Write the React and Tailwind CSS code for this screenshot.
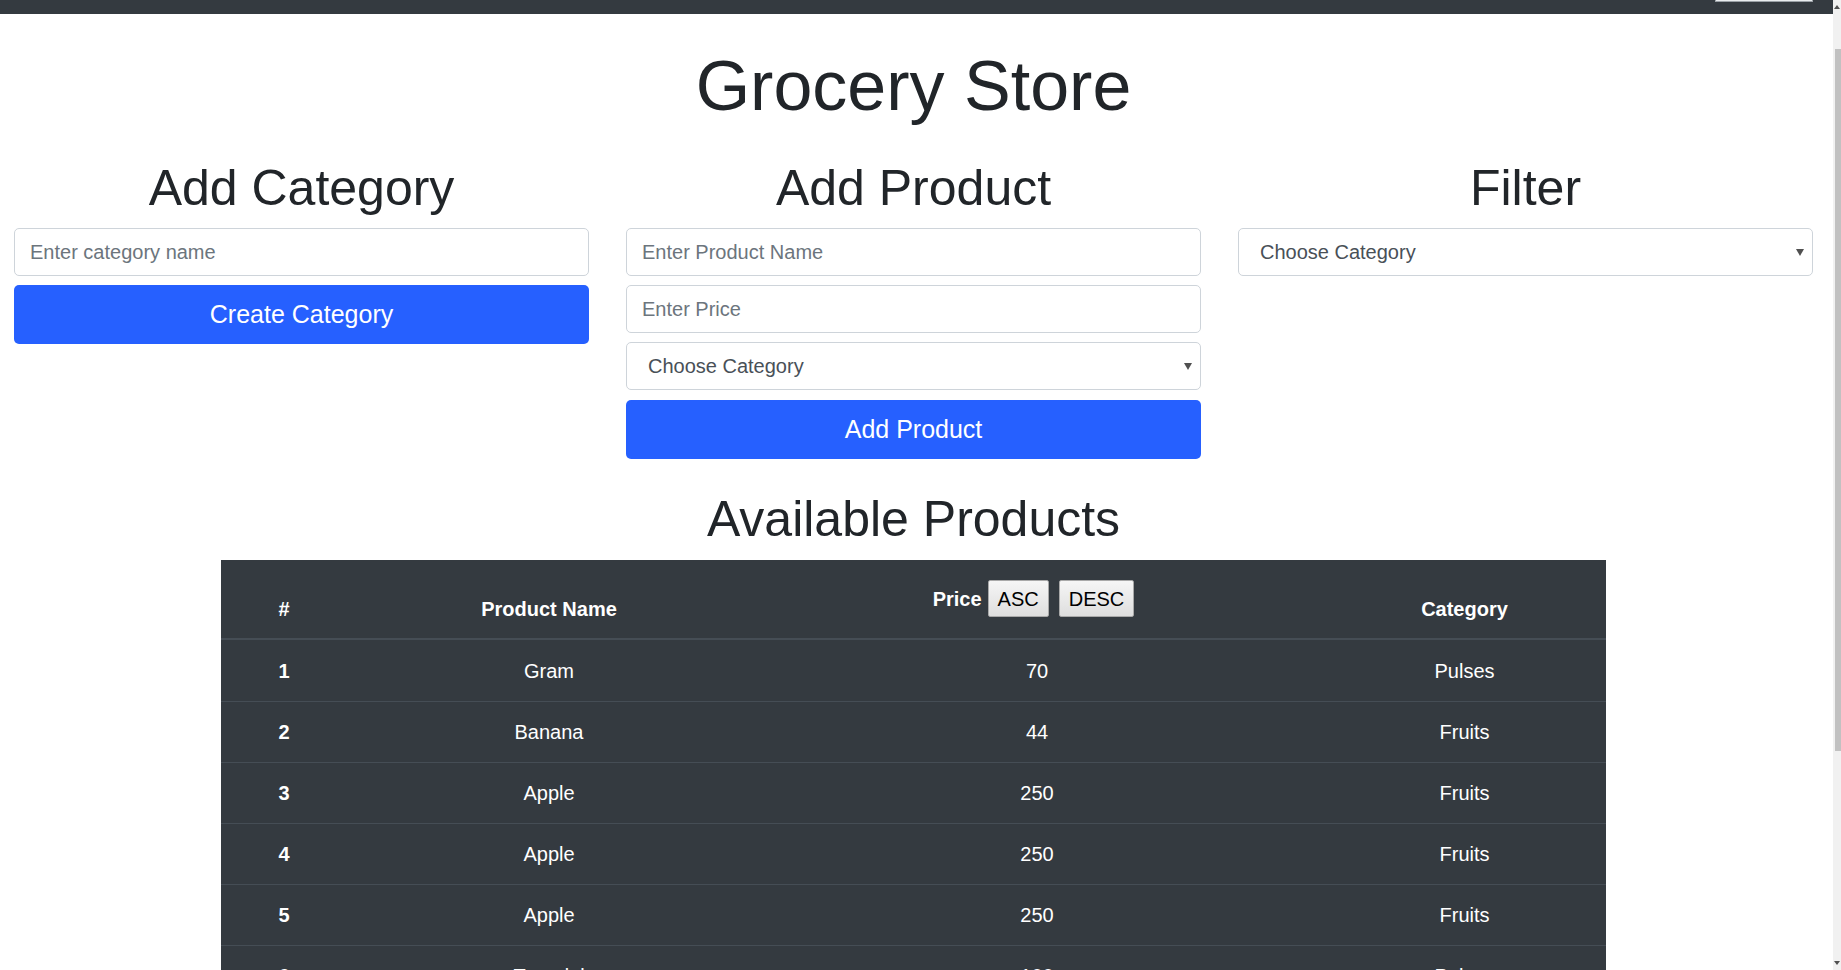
import React from "react";

const products = [
    { id: 1, name: "Gram", price: 70, category: "Pulses" },
    { id: 2, name: "Banana", price: 44, category: "Fruits" },
    { id: 3, name: "Apple", price: 250, category: "Fruits" },
    { id: 4, name: "Apple", price: 250, category: "Fruits" },
    { id: 5, name: "Apple", price: 250, category: "Fruits" },
    { id: 6, name: "Toor dal", price: 100, category: "Pulses" },
];

const inputCls =
    "block w-full h-[48px] px-[15px] text-[20px] text-[#495057] placeholder:text-[#6c757d] bg-white border border-[#ced4da] rounded-[5px] outline-none";

const SelectBox = ({ className = "" }) => (
    <div className={`relative ${className}`}>
        <select
            defaultValue=""
            className="block w-full h-[48px] pl-[21px] pr-[30px] text-[20px] text-[#495057] bg-white border border-[#ced4da] rounded-[5px] appearance-none outline-none"
        >
            <option value="">Choose Category</option>
            <option value="pulses">Pulses</option>
            <option value="fruits">Fruits</option>
        </select>
        <span className="pointer-events-none absolute right-[9px] top-[21px] w-0 h-0 border-x-[4px] border-x-transparent border-t-[7px] border-t-[#505050]"></span>
    </div>
);

const BlueButton = ({ children }) => (
    <button className="block w-full h-[59px] text-[25px] text-white bg-[#2660ff] rounded-[5px]">
        {children}
    </button>
);

const SortButton = ({ children }) => (
    <button className="h-[37px] px-[9px] text-[20px] font-normal text-black bg-gradient-to-b from-[#f6f6f6] to-[#dedede] border border-[#a9a9a9] rounded-[2px]">
        {children}
    </button>
);

const Scrollbar = () => (
    <div className="w-[8px] shrink-0 h-full bg-[#f1f1f1] flex flex-col items-center">
        <div className="h-[14px] flex items-center">
            <span className="w-0 h-0 border-x-[3px] border-x-transparent border-b-[4px] border-b-[#505050]"></span>
        </div>
        <div className="h-[35px]"></div>
        <div className="w-[6px] ml-[2px] h-[702px] bg-[#c1c1c1]"></div>
        <div className="flex-1"></div>
        <div className="h-[14px] flex items-center">
            <span className="w-0 h-0 border-x-[3px] border-x-transparent border-t-[4px] border-t-[#505050]"></span>
        </div>
    </div>
);

export default function App() {
    return (
        <div className="h-screen w-full flex overflow-hidden bg-white text-[#212529] font-['Liberation_Sans',Arial,sans-serif]">
            <div className="flex-1 min-w-0 h-full overflow-hidden">
                <nav className="h-[14px] bg-[#343a40] flex justify-end items-start pr-[20px]">
                    <div className="w-[98px] h-[2px] bg-[#e9ecef] border-x border-b border-[#9aa0a6]"></div>
                </nav>

                <div className="pr-[6px]">
                    <h1 className="mt-[30px] text-center text-[70px] leading-[84px] font-normal">Grocery Store</h1>

                    <div className="mt-[30px] grid grid-cols-3 gap-[37px] px-[14px] items-start">
                        <div>
                            <h1 className="text-center text-[50px] leading-[60px] mb-[10px]">Add Category</h1>
                            <input className={inputCls} placeholder="Enter category name" />
                            <div className="mt-[9px]">
                                <BlueButton>Create Category</BlueButton>
                            </div>
                        </div>

                        <div>
                            <h1 className="text-center text-[50px] leading-[60px] mb-[10px]">Add Product</h1>
                            <input className={inputCls} placeholder="Enter Product Name" />
                            <input className={`${inputCls} mt-[9px]`} placeholder="Enter Price" />
                            <SelectBox className="mt-[9px]" />
                            <div className="mt-[10px]">
                                <BlueButton>Add Product</BlueButton>
                            </div>
                        </div>

                        <div>
                            <h1 className="text-center text-[50px] leading-[60px] mb-[10px]">Filter</h1>
                            <SelectBox />
                        </div>
                    </div>

                    <h1 className="mt-[30px] mb-[11px] text-center text-[50px] leading-[60px]">Available Products</h1>

                    <table className="mx-auto w-[1385px] table-fixed border-separate border-spacing-0 bg-[#343a40] text-white text-[20px] text-center">
                        <colgroup>
                            <col className="w-[126px]" />
                            <col className="w-[404px]" />
                            <col className="w-[572px]" />
                            <col className="w-[283px]" />
                        </colgroup>
                        <thead>
                            <tr>
                                <th className="pt-[34px] pb-[14px] leading-[30px] align-bottom font-bold border-b-2 border-[#454d55]">#</th>
                                <th className="pt-[34px] pb-[14px] leading-[30px] align-bottom font-bold border-b-2 border-[#454d55]">Product Name</th>
                                <th className="pt-0 pb-[1px] align-middle font-bold border-b-2 border-[#454d55]">
                                    <div className="flex items-center justify-center pr-[7px]">
                                        <span className="leading-[30px] mr-[6px]">Price</span>
                                        <SortButton>ASC</SortButton>
                                        <span className="w-[10px]"></span>
                                        <SortButton>DESC</SortButton>
                                    </div>
                                </th>
                                <th className="pt-[34px] pb-[14px] leading-[30px] align-bottom font-bold border-b-2 border-[#454d55]">Category</th>
                            </tr>
                        </thead>
                        <tbody>
                            {products.map((p, i) => {
                                const cell = i === 0
                                    ? "pt-[16px] pb-[15px] leading-[30px]"
                                    : "pt-[15px] pb-[15px] leading-[30px] border-t border-[#454d55]";
                                return (
                                    <tr key={p.id}>
                                        <th scope="row" className={`${cell} font-bold`}>{p.id}</th>
                                        <td className={cell}>{p.name}</td>
                                        <td className={cell}>{p.price}</td>
                                        <td className={cell}>{p.category}</td>
                                    </tr>
                                );
                            })}
                        </tbody>
                    </table>
                </div>
            </div>
            <Scrollbar />
        </div>
    );
}
